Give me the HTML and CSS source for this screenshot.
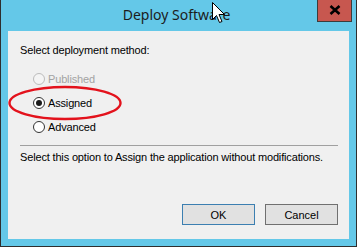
FILE: index.html
```html
<!DOCTYPE html>
<html>
<head>
<meta charset="utf-8">
<link rel="stylesheet" href="styles.css">
</head>
<body>
<div class="window">
  <div class="titlebar">
    <span></span>
    <span class="title">Deploy Software</span>
    <button class="close" aria-label="Close">
      <svg width="12" height="10" viewBox="0 0 12 10"><path d="M1.5 1 L10.5 9 M10.5 1 L1.5 9" stroke="#000" stroke-width="2.6" stroke-linecap="butt"/></svg>
    </button>
  </div>
  <div class="content">
    <div class="label">Select deployment method:</div>
    <div class="options">
      <label class="option disabled"><span class="radio"></span>Published</label>
      <label class="option"><span class="radio checked"></span>Assigned</label>
      <label class="option"><span class="radio"></span>Advanced</label>
    </div>
    <div class="sep"></div>
    <div class="desc">Select this option to Assign the application without modifications.</div>
    <div class="buttons">
      <button class="btn default">OK</button>
      <button class="btn">Cancel</button>
    </div>
  </div>
  <svg class="ellipse" width="116" height="36" viewBox="0 0 116 36"><ellipse cx="58" cy="18" rx="55.5" ry="16" fill="none" stroke="#e3121c" stroke-width="2.4"/></svg>
  <svg class="cursor" width="14" height="22" viewBox="0 0 14 22"><path d="M0.5 0.5 L0.5 17.5 L4.5 13.5 L7.5 20.5 L10 19.5 L7 12.5 L12.5 12.5 Z" fill="#fff" stroke="#000" stroke-width="1" stroke-linejoin="miter"/></svg>
</div>
</body>
</html>
```
FILE: styles.css
```css
html, body {
  margin: 0;
  padding: 0;
}
body {
  width: 357px;
  height: 247px;
  overflow: hidden;
  font-family: "Liberation Sans", Arial, sans-serif;
}
.window {
  position: relative;
  box-sizing: border-box;
  width: 357px;
  height: 247px;
  background: #64c8e8;
  border: 1px solid #2e2e2e;
  border-top: none;
  padding: 0 7px 7px 7px;
  display: flex;
  flex-direction: column;
}
.titlebar {
  height: 31px;
  margin: 0 -7px;
  padding-right: 4px;
  display: grid;
  grid-template-columns: 1fr auto 1fr;
  align-items: start;
}
.title {
  font-family: "Noto Sans", "Open Sans", sans-serif;
  font-size: 14px;
  color: #1c1c1c;
  line-height: 20px;
  padding-top: 5px;
}
.close {
  justify-self: end;
  width: 35px;
  height: 22px;
  margin: 0;
  padding: 0;
  border: 1px solid #3c3c3c;
  border-top: none;
  background: #c7574f;
  display: flex;
  align-items: center;
  justify-content: center;
}
.close svg { display: block; margin-top: -1px; }
.content {
  flex: 1;
  background: #f0f0f0;
  padding: 13px 11px 14px 12px;
  display: flex;
  flex-direction: column;
  font-size: 11px;
  letter-spacing: -0.16px;
  color: #000;
}
.label {
  line-height: 13px;
}
.options {
  margin-top: 10px;
  display: flex;
  flex-direction: column;
}
.option {
  height: 24px;
  display: flex;
  align-items: center;
  padding-left: 13px;
  line-height: 13px;
}
.option.disabled {
  color: #a3a3a3;
}
.radio {
  box-sizing: border-box;
  width: 12px;
  height: 12px;
  border-radius: 50%;
  border: 1px solid #333;
  background: #fff;
  margin-right: 3px;
  display: flex;
  align-items: center;
  justify-content: center;
}
.option.disabled .radio {
  border-color: #bcbcbc;
  background: #f4f4f4;
}
.radio.checked::after {
  content: "";
  width: 6px;
  height: 6px;
  border-radius: 50%;
  background: #1a1a1a;
}
.sep {
  margin-top: 6px;
  height: 1px;
  background: #a0a0a0;
}
.desc {
  margin-top: 5px;
  line-height: 13px;
}
.buttons {
  margin-top: auto;
  display: flex;
  justify-content: flex-end;
  gap: 10px;
}
.btn {
  box-sizing: border-box;
  width: 73px;
  height: 21px;
  margin: 0;
  padding: 0;
  background: #e1e1e1;
  border: 1px solid #707070;
  font-family: "Liberation Sans", Arial, sans-serif;
  font-size: 11px;
  color: #000;
}
.btn.default {
  border-color: #3c7fb1;
}
.ellipse {
  position: absolute;
  left: 6px;
  top: 85px;
}
.cursor {
  position: absolute;
  left: 211px;
  top: 2px;
}
```
